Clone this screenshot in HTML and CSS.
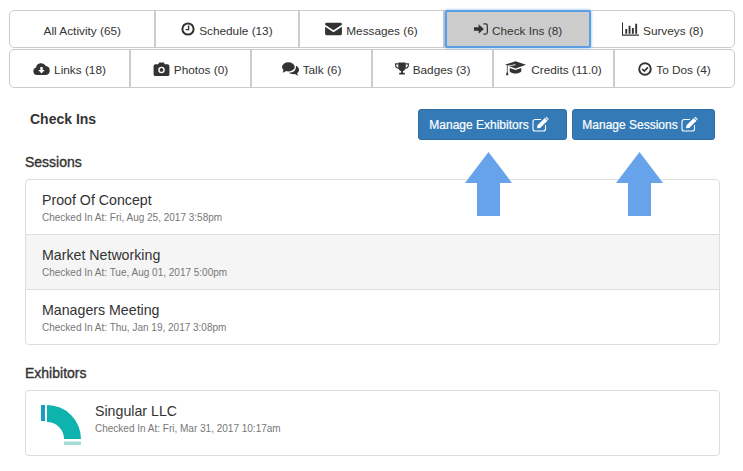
FILE: index.html
```html
<!DOCTYPE html>
<html lang="en">
<head>
<meta charset="utf-8">
<title>Check Ins</title>
<link rel="stylesheet" href="styles.css">
</head>
<body>
<div class="page">
  <nav class="tabs">
    <div class="tab-row">
      <a class="tab">All Activity (65)</a>
      <a class="tab"><svg class="ic" viewBox="0 0 14 14"><circle cx="7" cy="7" r="5.6" fill="none" stroke="#333" stroke-width="2"/><path d="M7.6 3.6v4H4.6" fill="none" stroke="#333" stroke-width="1.4"/></svg>Schedule (13)</a>
      <a class="tab"><svg class="ic ic-w" viewBox="0 0 18 14"><path d="M1.6 0.5h14.8a1.5 1.5 0 0 1 1.5 1.5v.6L9 8.4.1 2.6V2A1.5 1.5 0 0 1 1.600.5z" fill="#333"/><path d="M.1 4.6L9 10.4l8.900-5.800V12a1.500 1.500 0 0 1-1.500 1.500H1.600A1.500 1.500 0 0 1 .1 12z" fill="#333"/></svg>Messages (6)</a>
      <a class="tab tab-active"><svg class="ic" viewBox="0 0 15 14"><path d="M0 5h5V1.800L10.600 7 5 12.200V9H0z" fill="#333"/><path d="M10 1.500h2.300a2 2 0 0 1 2 2v7a2 2 0 0 1-2 2H10" fill="none" stroke="#333" stroke-width="1.300"/></svg>Check Ins (8)</a>
      <a class="tab"><svg class="ic ic-w" viewBox="0 0 18 14"><path d="M.5 0v13.500H18" fill="none" stroke="#333" stroke-width="1.200"/><path d="M3.500 7h2v5h-2zM7 3.500h2V12H7zM10.500 6h2v6h-2zM14 1.500h2V12h-2z" fill="#333"/></svg>Surveys (8)</a>
    </div>
    <div class="tab-row">
      <a class="tab"><svg class="ic ic-w" viewBox="0 0 17 13"><path d="M4 12.500a3.800 3.800 0 0 1-1-7.400A5.200 5.200 0 0 1 12.800 3.600 4.500 4.500 0 0 1 13 12.500z" fill="#333"/><path d="M7.300 4.500h2.400v3h2L8.500 11 5.300 7.500h2z" fill="#fff"/></svg>Links (18)</a>
      <a class="tab"><svg class="ic ic-w" viewBox="0 0 17 15"><path fill-rule="evenodd" d="M2 2.500h3L6 .5h5l1 2h3a2 2 0 0 1 2 2V13a2 2 0 0 1-2 2H2a2 2 0 0 1-2-2V4.500a2 2 0 0 1 2-2zM8.500 5a3.500 3.500 0 1 0 0 7 3.500 3.500 0 0 0 0-7z" fill="#333"/><circle cx="8.500" cy="8.500" r="2" fill="#333"/></svg>Photos (0)</a>
      <a class="tab"><svg class="ic ic-w" viewBox="0 0 16 13"><ellipse cx="6" cy="4.500" rx="6" ry="4.300" fill="#333"/><path d="M1.500 6.500L.8 10l4-2z" fill="#333"/><path d="M13.200 3.500c1.700.8 2.800 2.200 2.800 3.800 0 1.300-.7 2.400-1.800 3.200l1 2.300-3.200-1.500c-2 .3-4.200-.2-5.500-1.300 3.800.2 7-2 6.700-6.500z" fill="#333"/></svg>Talk (6)</a>
      <a class="tab"><svg class="ic" viewBox="0 0 15 14"><path d="M3.500 0h8v5c0 2.200-1.500 3.700-3 4.200V11h2v2h-6v-2h2V9.200C5 8.700 3.500 7.200 3.500 5z" fill="#333"/><path d="M3.500 1.500H.7v1.700c0 1.500 1.300 2.800 3.300 3M11.500 1.500h2.800v1.700c0 1.500-1.300 2.800-3.300 3" fill="none" stroke="#333" stroke-width="1.200"/></svg>Badges (3)</a>
      <a class="tab"><svg class="ic ic-cap" viewBox="0 0 20 14"><path d="M10 0l10 3.500L10 7 3.500 4.700 10 3.800 9.800 3 2.500 4.200 0 3.500z" fill="#333"/><path d="M4.500 6.500L10 8.500l5.500-2v3.300c-1.500 1.300-3.500 1.900-5.500 1.900s-4-.6-5.500-1.900z" fill="#333"/><path d="M1.800 4v6l-1 3.500h2.500l-.8-3.500V4z" fill="#333"/></svg>Credits (11.0)</a>
      <a class="tab"><svg class="ic" viewBox="0 0 14 14"><circle cx="7" cy="7" r="5.800" fill="none" stroke="#333" stroke-width="1.900"/><path d="M4.200 7l2.100 2.100 3.600-3.700" fill="none" stroke="#333" stroke-width="1.700"/></svg>To Dos (4)</a>
    </div>
  </nav>

  <header class="head">
    <h1 class="title">Check Ins</h1>
    <div class="actions">
      <a class="btn btn-ex">Manage Exhibitors<svg class="edit" viewBox="0 0 18 15"><use href="#edit"/></svg></a>
      <a class="btn btn-se">Manage Sessions<svg class="edit" viewBox="0 0 18 15"><use href="#edit"/></svg></a>
    </div>
  </header>

  <h2 class="section">Sessions</h2>
  <ul class="list">
    <li class="item"><div class="name">Proof Of Concept</div><div class="meta">Checked In At: Fri, Aug 25, 2017 3:58pm</div></li>
    <li class="item item-alt"><div class="name">Market Networking</div><div class="meta">Checked In At: Tue, Aug 01, 2017 5:00pm</div></li>
    <li class="item"><div class="name">Managers Meeting</div><div class="meta">Checked In At: Thu, Jan 19, 2017 3:08pm</div></li>
  </ul>

  <h2 class="section section-ex">Exhibitors</h2>
  <ul class="list">
    <li class="item item-logo">
      <svg class="logo" viewBox="0 0 41 41">
        <rect x="0" y="0" width="4" height="16" fill="#1a9cc4"/>
        <path d="M6 0A34 34 0 0 1 40 34H23A17 17 0 0 0 6 17z" fill="#0eb3ad"/>
        <rect x="23" y="36.500" width="17" height="3.500" fill="#a2dcd9"/>
      </svg>
      <div><div class="name">Singular LLC</div><div class="meta">Checked In At: Fri, Mar 31, 2017 10:17am</div></div>
    </li>
  </ul>

  <svg class="arrow arrow-1" viewBox="0 0 47 64"><path d="M23.500 0L47 31H35V64H12V31H0z" fill="#66a3ea"/></svg>
  <svg class="arrow arrow-2" viewBox="0 0 47 64"><path d="M23.500 0L47 31H35V64H12V31H0z" fill="#66a3ea"/></svg>

  <svg class="defs" aria-hidden="true"><defs>
    <g id="edit"><path d="M9 2.500H3a2 2 0 0 0-2 2V12a2 2 0 0 0 2 2h8.500a2 2 0 0 0 2-2V8" fill="none" stroke="#fff" stroke-width="1.100"/><path d="M5 11.300l.5-3L12.800 1l2.700 2.700-7.300 7.200zM13.600.3a1 1 0 0 1 1.300 0l1.400 1.400a1 1 0 0 1 0 1.300l-.2.200-2.700-2.700z" fill="#fff"/></g>
  </defs></svg>
</div>
</body>
</html>
```
FILE: styles.css
```css
* { box-sizing: border-box; }
html, body { margin: 0; padding: 0; background: #fff; }
body {
  font-family: "Liberation Sans", Arial, sans-serif;
  color: #333;
  font-size: 12px;
}
.page { position: relative; width: 743px; height: 471px; padding: 10px 23px 0 25px; overflow: hidden; }

.tabs { margin: 0 -15px 0 -16px; width: 726px; display: flex; flex-direction: column; gap: 1px; }
.tab-row { display: flex; height: 38px; border: 1px solid #ccc; border-radius: 5px; }
.tab-row:first-child { padding-left: 1px; }
.tab-row:first-child .tab { padding-top: 3px; }
.tab-row + .tab-row { height: 39px; }
.tab {
  flex: 1 1 0;
  display: flex;
  align-items: center;
  justify-content: center;
  gap: 4px;
  border-right: 2px solid #ccc;
  font-size: 11.800px;
  padding-top: 3px;
}
.tab:last-child { border-right: 0; }
.tab-row .tab-active {
  position: relative;
  margin: -1px 0;
  background: #ccc;
  border: 2px solid #5a9fe6;
  border-radius: 2px;
  box-shadow: 0 0 3px rgba(90, 159, 230, .8);
}
.ic { width: 14px; height: 14px; flex: none; margin-top: -3px; }
.ic-w { width: 17px; height: 14px; }
.ic-cap { width: 21px; height: 15px; margin-right: 1px; }

.head { display: flex; justify-content: space-between; margin-top: 21px; height: 31px; }
.title { margin: 2px 0 0 5px; font-size: 14px; line-height: 16px; font-weight: bold; color: #333; }
.actions { display: flex; gap: 5px; margin-right: 5px; }
.btn {
  display: flex;
  align-items: center;
  justify-content: center;
  gap: 3px;
  height: 31px;
  padding-right: 6px;
  background: #337ab7;
  border: 1px solid #2e6da4;
  border-radius: 3px;
  color: #fff;
  font-size: 12px;
  -webkit-text-stroke: .2px #fff;
}
.btn-ex { width: 149px; }
.btn-se { width: 143px; }
.edit { width: 18px; height: 15px; }

.section {
  margin: 14px 0 9px;
  font-size: 14px;
  line-height: 16px;
  font-weight: normal;
  -webkit-text-stroke: .35px #333;
  color: #333;
}
.section-ex { margin-top: 20px; }
.list { margin: 0; padding: 0; list-style: none; border: 1px solid #ddd; border-radius: 4px; }
.item { height: 55px; padding: 12px 15px 0 16px; border-top: 1px solid #ddd; }
.item:first-child { height: 54px; padding-top: 12px; border-top: 0; }
.item-alt { background: #f5f5f5; }
.name { font-size: 14.200px; line-height: 17px; color: #333; }
.meta { margin-top: 3px; font-size: 10px; line-height: 12px; color: #777; }
.list .item-logo { display: flex; align-items: flex-start; gap: 13px; height: 64px; padding: 12px 15px 0; }
.logo { width: 41px; height: 41px; flex: none; margin-top: 2px; }

.arrow { position: absolute; width: 47px; height: 64px; top: 152px; }
.arrow-1 { left: 465px; }
.arrow-2 { left: 616px; }
.defs { position: absolute; width: 0; height: 0; }
```
